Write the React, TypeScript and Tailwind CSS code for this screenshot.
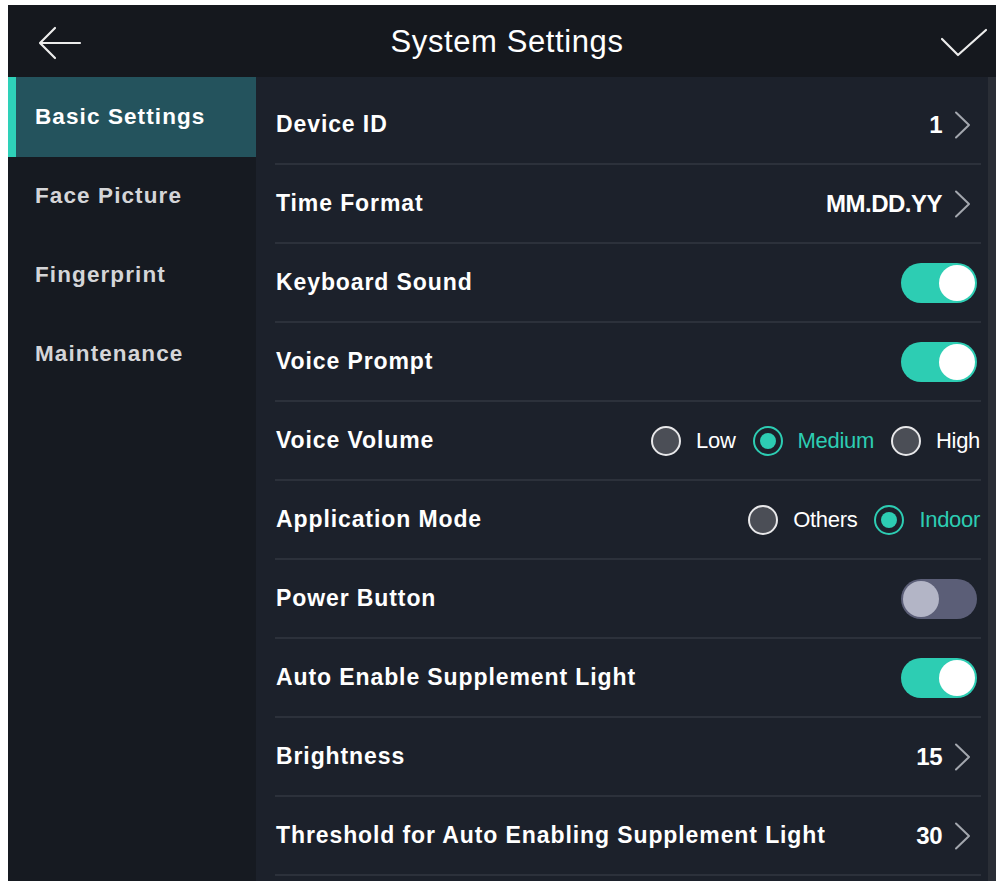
import { useState } from 'react';

type Row =
  | { label: string; kind: 'value'; value: string }
  | { label: string; kind: 'toggle'; on: boolean }
  | { label: string; kind: 'radio'; options: string[]; selected: string };

const rows: Row[] = [
  { label: 'Device ID', kind: 'value', value: '1' },
  { label: 'Time Format', kind: 'value', value: 'MM.DD.YY' },
  { label: 'Keyboard Sound', kind: 'toggle', on: true },
  { label: 'Voice Prompt', kind: 'toggle', on: true },
  { label: 'Voice Volume', kind: 'radio', options: ['Low', 'Medium', 'High'], selected: 'Medium' },
  { label: 'Application Mode', kind: 'radio', options: ['Others', 'Indoor'], selected: 'Indoor' },
  { label: 'Power Button', kind: 'toggle', on: false },
  { label: 'Auto Enable Supplement Light', kind: 'toggle', on: true },
  { label: 'Brightness', kind: 'value', value: '15' },
  { label: 'Threshold for Auto Enabling Supplement Light', kind: 'value', value: '30' },
];

const menu = ['Basic Settings', 'Face Picture', 'Fingerprint', 'Maintenance'];

function Chevron() {
  return (
    <svg width="17" height="28" viewBox="0 0 17 28" fill="none" className="ml-[12px]">
      <path d="M2 1.5 L15 14 L2 26.5" stroke="#a3a7ae" strokeWidth="2" strokeLinecap="round" strokeLinejoin="round" />
    </svg>
  );
}

function Toggle({ on }: { on: boolean }) {
  return (
    <div
      className={
        'flex h-[40px] w-[76px] items-center rounded-full px-[2px] ' +
        (on ? 'justify-end bg-[#2dcdb3]' : 'justify-start bg-[#5b5e77]')
      }
    >
      <div className={'h-[36px] w-[36px] rounded-full ' + (on ? 'bg-white' : 'bg-[#b3b5c6]')} />
    </div>
  );
}

function Radio({ label, active }: { label: string; active: boolean }) {
  return (
    <div className="flex items-center">
      {active ? (
        <div className="flex h-[30px] w-[30px] items-center justify-center rounded-full border-[2px] border-[#2dcdb3] bg-[#1c212b]">
          <div className="h-[16px] w-[16px] rounded-full bg-[#2dcdb3]" />
        </div>
      ) : (
        <div className="h-[30px] w-[30px] rounded-full border-[2px] border-[#e8e8ea] bg-[#4b4e56]" />
      )}
      <span
        className={
          'ml-[15px] text-[22px] tracking-[-0.3px] ' + (active ? 'text-[#2dcdb3]' : 'text-white')
        }
      >
        {label}
      </span>
    </div>
  );
}

export default function App() {
  const [active, setActive] = useState('Basic Settings');

  return (
    <div
      className="h-[881px] w-[1000px] overflow-hidden bg-white pl-[8px] pr-[4px] pt-[5px]"
      style={{ fontFamily: '"Liberation Sans", Arial, sans-serif' }}
    >
      <div className="flex h-[876px] flex-col bg-[#15181e]">
        {/* header */}
        <div className="flex h-[72px] shrink-0 items-center justify-between px-[30px] pt-[3px]">
          <svg width="44" height="34" viewBox="0 0 44 34" fill="none">
            <path d="M42 17 H3 M17 2 L2 17 L17 32" stroke="#ececec" strokeWidth="2.2" strokeLinecap="round" strokeLinejoin="round" />
          </svg>
          <h1 className="-ml-[8px] text-[31px] tracking-[0.6px] text-white">System Settings</h1>
          <svg width="48" height="30" viewBox="0 0 48 30" fill="none" className="-mr-[22px]">
            <path d="M2 11 L18 27 L46 2" stroke="#ececec" strokeWidth="2.2" strokeLinecap="round" strokeLinejoin="round" />
          </svg>
        </div>

        <div className="flex flex-1">
          {/* sidebar */}
          <div className="w-[248px] shrink-0 bg-[#161a21]">
            {menu.map((m) => (
              <button
                key={m}
                onClick={() => setActive(m)}
                className={
                  'flex h-[80px] w-full items-center border-l-[8px] pl-[19px] text-left text-[22.5px] font-semibold tracking-[1.1px] -mb-[1px] ' +
                  (active === m
                    ? 'border-[#2ed1b9] bg-[#24535d] text-white'
                    : 'border-transparent text-[#d4d5d8]')
                }
              >
                {m}
              </button>
            ))}
          </div>

          {/* content */}
          <div className="flex-1 bg-[#1c212b] pl-[19px] pr-[7px] pt-[9px]">
            {rows.map((r) => (
              <div
                key={r.label}
                className="flex h-[79px] items-center justify-between border-b-[2px] border-[#2c313b] pl-[1px] pr-[4px]"
              >
                <span className="text-[23px] font-bold tracking-[0.9px] text-white">{r.label}</span>
                {r.kind === 'value' && (
                  <div className="flex items-center pr-[6px]">
                    <span className="text-[24px] font-bold tracking-[-0.5px] text-white">{r.value}</span>
                    <Chevron />
                  </div>
                )}
                {r.kind === 'toggle' && <Toggle on={r.on} />}
                {r.kind === 'radio' && (
                  <div className="-mr-[3px] flex items-center gap-[17px]">
                    {r.options.map((o) => (
                      <Radio key={o} label={o} active={o === r.selected} />
                    ))}
                  </div>
                )}
              </div>
            ))}
          </div>
          <div className="w-[8px] shrink-0 bg-[#2a2e36]" />
        </div>
      </div>
    </div>
  );
}
